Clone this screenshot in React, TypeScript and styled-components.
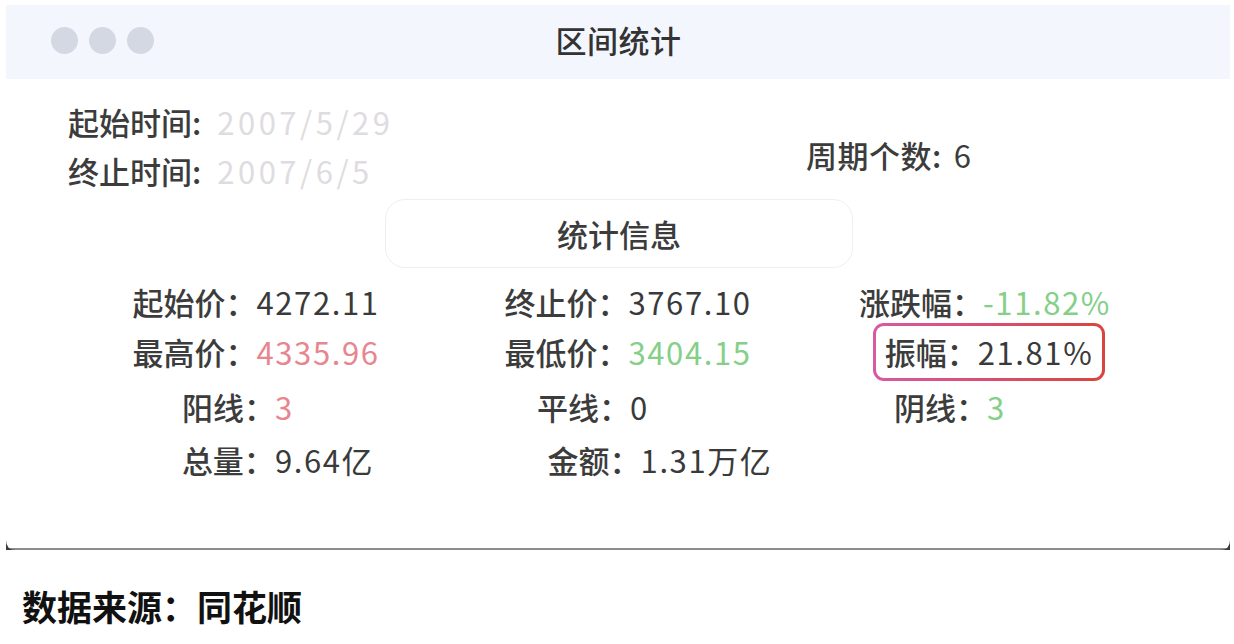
import React from "react";
import styled, { createGlobalStyle } from "styled-components";

const Global = createGlobalStyle`
  html, body { margin: 0; padding: 0; background: #ffffff; }
  body { font-family: "Noto Sans CJK SC", "Noto Sans", sans-serif; }
`;

const Page = styled.div`
  padding: 5px 4px 0 6px;
`;

const Window = styled.div`
  position: relative;
  width: 1224px;
  background: #ffffff;
  border-bottom: 2px solid #8d8d8d;
  &::before, &::after {
    content: "";
    position: absolute;
    bottom: -2px;
    width: 10px;
    height: 10px;
    background: #3a3a3c;
  }
  &::before { left: 0; clip-path: path("M0 0 Q0 10 10 10 L0 10 Z"); }
  &::after { right: 0; clip-path: path("M10 0 Q10 10 0 10 L10 10 Z"); }
`;

const TitleBar = styled.div`
  height: 74px;
  background: #f4f6fe;
  display: grid;
  grid-template-columns: 1fr auto 1fr;
  align-items: center;
  padding-left: 45px;
`;

const Dots = styled.div`
  display: flex;
  gap: 11px;
  margin-top: -4px;
`;

const Dot = styled.span`
  width: 27px;
  height: 27px;
  border-radius: 50%;
  background: #d3d8e3;
`;

const Title = styled.div`
  font-size: 31px;
  font-weight: 500;
  color: #333333;
  letter-spacing: 0.5px;
  margin-top: -6px;
  transform: translateX(-22px);
`;

const Body = styled.div`
  padding: 18px 0 65px;
`;

const TopRow = styled.div`
  display: flex;
  padding-left: 62px;
`;

const Dates = styled.div`
  display: flex;
  flex-direction: column;
  width: 738px;
`;

const DateLine = styled.div`
  height: 49px;
  line-height: 49px;
  font-size: 31px;
  font-weight: 500;
  color: #3c3c3c;
  white-space: nowrap;
`;

const DateValue = styled.span`
  color: #dfdce1;
  font-weight: 400;
  letter-spacing: 3.5px;
  margin-left: 16px;
`;

const Period = styled.div`
  margin-top: 36px;
  font-size: 31px;
  font-weight: 500;
  color: #3c3c3c;
  height: 44px;
  line-height: 44px;
  white-space: nowrap;
  letter-spacing: 0.5px;
`;

const PeriodValue = styled.span`
  font-weight: 400;
  margin-left: 12px;
`;

const InfoBox = styled.div`
  width: 466px;
  height: 67px;
  margin: 4px 0 0 379px;
  border: 1px solid #f4ecf1;
  border-radius: 20px;
  display: flex;
  align-items: center;
  justify-content: center;
  font-size: 31px;
  font-weight: 500;
  color: #3c3c3c;
`;

const StatsGrid = styled.div`
  margin-top: 9px;
  padding-left: 64px;
  display: grid;
  grid-template-columns: 372px 372px 342px;
  grid-template-rows: 50px 50px 60px 46px;
  align-items: center;
`;

const Stat = styled.div<{ $shift?: number }>`
  justify-self: center;
  font-size: 31px;
  font-weight: 500;
  color: #3c3c3c;
  line-height: 50px;
  white-space: nowrap;
  transform: translateX(${(p) => p.$shift ?? 0}px);
`;

const Highlight = styled.span`
  display: inline-block;
  line-height: 50px;
  padding: 1px 9px;
  margin: -4px -12px;
  border: 3px solid transparent;
  border-radius: 11px;
  background:
    linear-gradient(#ffffff, #ffffff) padding-box,
    linear-gradient(90deg, #d75aa2, #d8453d) border-box;
`;

const Value = styled.span<{ $tone?: "up" | "down" }>`
  color: ${(p) => (p.$tone === "up" ? "#e7868f" : p.$tone === "down" ? "#85cf89" : "#3a3a3a")};
  font-weight: 400;
  letter-spacing: 1.6px;
`;

const Source = styled.div`
  margin: 34px 0 0 16px;
  font-size: 35px;
  font-weight: 700;
  color: #111111;
  line-height: 44px;
`;

type Item = {
  label: string;
  value: string;
  tone?: "up" | "down";
  col: number;
  row: number;
  shift?: number;
  highlight?: boolean;
};

const items: Item[] = [
  { label: "起始价：", value: "4272.11", col: 1, row: 1 },
  { label: "终止价：", value: "3767.10", col: 2, row: 1 },
  { label: "涨跌幅：", value: "-11.82%", tone: "down", col: 3, row: 1 },
  { label: "最高价：", value: "4335.96", tone: "up", col: 1, row: 2 },
  { label: "最低价：", value: "3404.15", tone: "down", col: 2, row: 2 },
  { label: "振幅：", value: "21.81%", col: 3, row: 2, highlight: true, shift: 4 },
  { label: "阳线：", value: "3", tone: "up", col: 1, row: 3, shift: -18 },
  { label: "平线：", value: "0", col: 2, row: 3, shift: -35 },
  { label: "阴线：", value: "3", tone: "down", col: 3, row: 3, shift: -35 },
  { label: "总量：", value: "9.64亿", col: 1, row: 4, shift: 22 },
  { label: "金额：", value: "1.31万亿", col: 2, row: 4, shift: 32 },
];

export default function App() {
  return (
    <>
      <Global />
      <Page>
        <Window>
          <TitleBar>
            <Dots>
              <Dot />
              <Dot />
              <Dot />
            </Dots>
            <Title>区间统计</Title>
            <div />
          </TitleBar>
          <Body>
            <TopRow>
              <Dates>
                <DateLine>
                  起始时间:<DateValue>2007/5/29</DateValue>
                </DateLine>
                <DateLine>
                  终止时间:<DateValue>2007/6/5</DateValue>
                </DateLine>
              </Dates>
              <Period>
                周期个数:<PeriodValue>6</PeriodValue>
              </Period>
            </TopRow>
            <InfoBox>统计信息</InfoBox>
            <StatsGrid>
              {items.map((it) => {
                const content = (
                  <>
                    {it.label}
                    <Value $tone={it.tone}>{it.value}</Value>
                  </>
                );
                return (
                  <Stat
                    key={it.label}
                    $shift={it.shift}
                    style={{ gridColumn: it.col, gridRow: it.row }}
                  >
                    {it.highlight ? <Highlight>{content}</Highlight> : content}
                  </Stat>
                );
              })}
            </StatsGrid>
          </Body>
        </Window>
        <Source>数据来源：同花顺</Source>
      </Page>
    </>
  );
}
